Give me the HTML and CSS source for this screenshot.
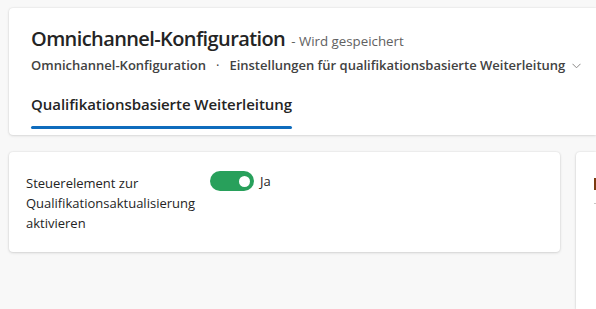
FILE: index.html
```html
<!DOCTYPE html>
<html lang="de">
<head>
<meta charset="utf-8">
<link rel="stylesheet" href="styles.css">
</head>
<body>
<div class="page">
  <header class="header-card">
    <div class="title-row">
      <h1 class="title">Omnichannel-Konfiguration</h1>
      <span class="status">- Wird gespeichert</span>
    </div>
    <nav class="crumbs">
      <span class="crumb">Omnichannel-Konfiguration</span>
      <span class="sep">·</span>
      <span class="crumb">Einstellungen für qualifikationsbasierte Weiterleitung</span>
      <svg class="chev" width="9" height="6" viewBox="0 0 9 6"><path d="M0.5 0.8 L4.5 4.8 L8.5 0.8" fill="none" stroke="#8a8886" stroke-width="1"/></svg>
    </nav>
    <div class="tabs">
      <div class="tab active">Qualifikationsbasierte Weiterleitung</div>
    </div>
  </header>
  <div class="content">
    <section class="card">
      <div class="field-label">Steuerelement zur Qualifikationsaktualisierung aktivieren</div>
      <div class="toggle-wrap">
        <span class="toggle"><span class="knob"></span></span>
        <span class="toggle-text">Ja</span>
      </div>
    </section>
    <section class="card side">
      <div class="side-mark"></div>
      <div class="side-line"></div>
    </section>
  </div>
</div>
</body>
</html>
```

FILE: styles.css
```css
* { box-sizing: border-box; }
html, body { margin: 0; padding: 0; }
body {
  background: #f8f8f8;
  font-family: "Segoe UI", "Open Sans", "Noto Sans", sans-serif;
  color: #242424;
  overflow: hidden;
  width: 596px;
  height: 309px;
}
.page {
  padding: 8px 0 0 9px;
  display: flex;
  flex-direction: column;
  gap: 17px;
  height: 309px;
}
.header-card {
  background: #fff;
  border-radius: 4px 0 0 4px;
  box-shadow: 0 0 2px rgba(0,0,0,0.12), 0 1px 3px rgba(0,0,0,0.1);
  padding: 17px 0 0 22px;
  height: 127px;
  flex: none;
}
.title-row {
  display: flex;
  align-items: baseline;
  gap: 6px;
  height: 28px;
}
.title {
  margin: 0;
  font-size: 20px;
  font-weight: 600;
  color: #242424;
  letter-spacing: -0.6px;
}
.status {
  font-size: 13.3px;
  color: #616161;
}
.crumbs {
  display: flex;
  align-items: center;
  margin-top: 2px;
  font-size: 13px;
  font-weight: 600;
  color: #424242;
  height: 20px;
}
.sep { margin: 0 10px 0 10px; font-weight: 400; }
.chev { margin-left: 7px; margin-top: 2px; }
.tabs {
  margin-top: 19px;
  display: flex;
}
.tab {
  font-size: 15px;
  font-weight: 600;
  color: #242424;
  letter-spacing: -0.05px;
  padding-bottom: 12px;
  position: relative;
}
.tab.active::after {
  content: "";
  position: absolute;
  left: 0; right: 0; bottom: -3px;
  height: 3px;
  border-radius: 2px;
  background: #0f6cbd;
}
.content {
  display: flex;
  gap: 16px;
  flex: 1;
  min-height: 0;
}
.card {
  background: #fff;
  border-radius: 4px;
  box-shadow: 0 0 2px rgba(0,0,0,0.12), 0 1px 3px rgba(0,0,0,0.12);
  height: 100px;
  width: 551px;
  flex: none;
  display: flex;
  padding: 21px 0 0 17px;
}
.field-label {
  width: 184px;
  font-size: 13px;
  line-height: 20px;
  color: #242424;
}
.toggle-wrap {
  display: flex;
  align-items: center;
  gap: 6px;
  height: 20px;
  margin-top: -2px;
}
.toggle {
  width: 44px;
  height: 20px;
  border-radius: 10px;
  background: #28a05b;
  position: relative;
}
.knob {
  position: absolute;
  width: 11px; height: 11px;
  border-radius: 50%;
  background: #fff;
  right: 4px; top: 4.5px;
}
.toggle-text { font-size: 13px; color: #242424; }
.card.side {
  width: 20px;
  height: 100%;
  padding: 26px 0 0 18px;
  flex-direction: column;
  border-radius: 4px 0 0 0;
}
.side-mark {
  width: 2px; height: 12px;
  background: #7a3a10;
}
.side-line {
  margin-top: 13px;
  width: 2px; height: 1px;
  background: #c8c6c4;
}
```
